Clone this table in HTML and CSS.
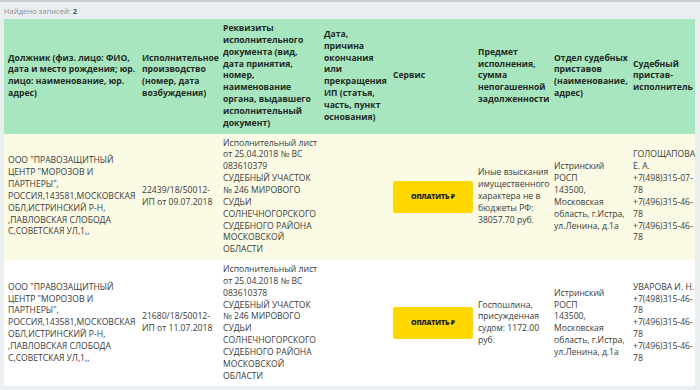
FILE: index.html
```html
<!DOCTYPE html>
<html lang="ru">
<head>
<meta charset="utf-8">
<link rel="stylesheet" href="styles.css">
</head>
<body>
<div class="page">
  <div class="found">Найдено записей: <b>2</b></div>
  <table class="results">
    <colgroup>
      <col class="c1"><col class="c2"><col class="c3"><col class="c4"><col class="c5"><col class="c6"><col class="c7"><col class="c8">
    </colgroup>
    <thead>
      <tr>
        <th>Должник (физ. лицо: ФИО, дата и место рождения; юр. лицо: наименование, юр. адрес)</th>
        <th>Исполнительное производство (номер, дата возбуждения)</th>
        <th>Реквизиты исполнительного документа (вид, дата принятия, номер, наименование органа, выдавшего исполнительный документ)</th>
        <th>Дата, причина окончания или прекращения ИП (статья, часть, пункт основания)</th>
        <th>Сервис</th>
        <th>Предмет исполнения, сумма непогашенной задолженности</th>
        <th>Отдел судебных приставов (наименование, адрес)</th>
        <th>Судебный пристав-исполнитель</th>
      </tr>
    </thead>
    <tbody>
      <tr class="odd">
        <td>ООО "ПРАВОЗАЩИТНЫЙ ЦЕНТР "МОРОЗОВ И ПАРТНЕРЫ", РОССИЯ,143581,МОСКОВСКАЯ ОБЛ,ИСТРИНСКИЙ Р-Н, ,ПАВЛОВСКАЯ СЛОБОДА С,СОВЕТСКАЯ УЛ,1,,</td>
        <td>22439/18/50012-ИП от 09.07.2018</td>
        <td>Исполнительный лист от 25.04.2018 № ВС 083610379<br>СУДЕБНЫЙ УЧАСТОК № 246 МИРОВОГО СУДЬИ СОЛНЕЧНОГОРСКОГО СУДЕБНОГО РАЙОНА МОСКОВСКОЙ ОБЛАСТИ</td>
        <td></td>
        <td><span class="pay">ОПЛАТИТЬ ₽</span></td>
        <td>Иные взыскания имущественного характера не в бюджеты РФ: 38057.70 руб.</td>
        <td>Истринский РОСП<br>143500, Московская область, г.Истра, ул.Ленина, д.1а</td>
        <td>ГОЛОЩАПОВА Е. А.<br>+7(498)315-07-78<br>+7(496)315-46-78<br>+7(496)315-46-78</td>
      </tr>
      <tr class="even">
        <td>ООО "ПРАВОЗАЩИТНЫЙ ЦЕНТР "МОРОЗОВ И ПАРТНЕРЫ", РОССИЯ,143581,МОСКОВСКАЯ ОБЛ,ИСТРИНСКИЙ Р-Н, ,ПАВЛОВСКАЯ СЛОБОДА С,СОВЕТСКАЯ УЛ,1,,</td>
        <td>21680/18/50012-ИП от 11.07.2018</td>
        <td>Исполнительный лист от 25.04.2018 № ВС 083610378<br>СУДЕБНЫЙ УЧАСТОК № 246 МИРОВОГО СУДЬИ СОЛНЕЧНОГОРСКОГО СУДЕБНОГО РАЙОНА МОСКОВСКОЙ ОБЛАСТИ</td>
        <td></td>
        <td><span class="pay">ОПЛАТИТЬ ₽</span></td>
        <td>Госпошлина, присужденная судом: 1172.00 руб.</td>
        <td>Истринский РОСП<br>143500, Московская область, г.Истра, ул.Ленина, д.1а</td>
        <td>УВАРОВА И. Н.<br>+7(498)315-46-78<br>+7(496)315-46-78<br>+7(496)315-46-78</td>
      </tr>
    </tbody>
  </table>
</div>
</body>
</html>
```
FILE: styles.css
```css
html, body {
  margin: 0;
  padding: 0;
}
body {
  background: #e9eef1;
  font-family: "Open Sans", "Noto Sans", sans-serif;
  color: #3a3a3a;
  border-top: 2px solid #c9cdd0;
}
.page {
  padding: 4px 5px 0 4px;
}
.found {
  font-size: 7.6px;
  line-height: 10px;
  color: #8a8f93;
  height: 13px;
}
.found b {
  color: #555;
}
.results {
  width: 691px;
  border-collapse: collapse;
  table-layout: fixed;
  font-size: 8.6px;
  line-height: 11.85px;
}
.c1 { width: 134px; }
.c2 { width: 81px; }
.c3 { width: 101px; }
.c4 { width: 69px; }
.c5 { width: 85px; }
.c6 { width: 76px; }
.c7 { width: 79px; }
.c8 { width: 66px; }
.results th,
.results td {
  padding: 4px 0 4px 4px;
  vertical-align: middle;
  text-align: left;
}
.results th {
  background: #a8e6bf;
  color: #1f2a24;
  font-weight: 700;
  font-size: 8.65px;
}
.results thead tr {
  height: 114px;
}
.results tr.odd td {
  background: #fafae5;
}
.results tr.even td {
  background: #ffffff;
}
.results tbody tr {
  height: 125px;
}
.pay {
  display: flex;
  align-items: center;
  justify-content: center;
  width: 80px;
  height: 32px;
  background: #ffd800;
  border-radius: 2px;
  font-size: 7px;
  font-weight: 800;
  color: #222;
  letter-spacing: -0.2px;
}
```
